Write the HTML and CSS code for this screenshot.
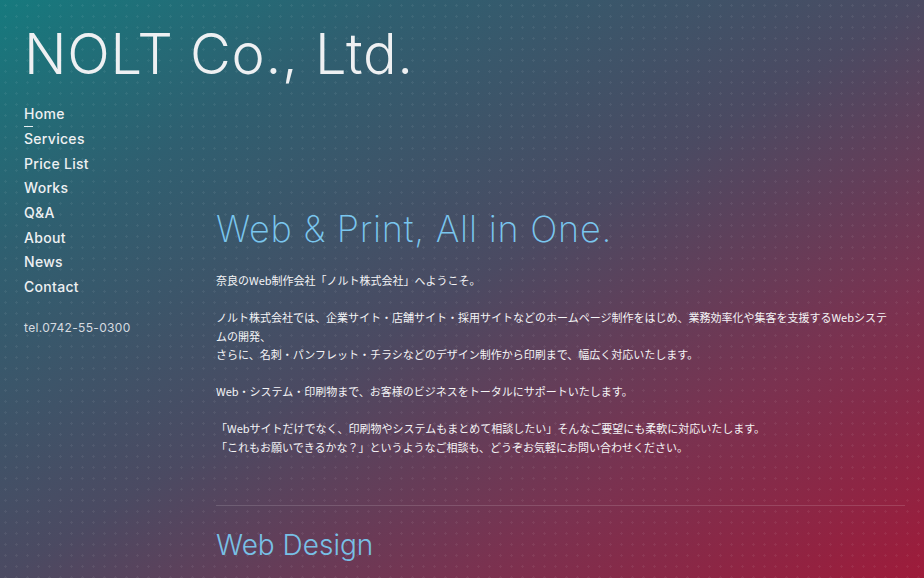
FILE: index.html
```html
<!DOCTYPE html>
<html lang="ja">
<head>
<meta charset="utf-8">
<title>NOLT Co., Ltd.</title>
<link rel="stylesheet" href="styles.css">
</head>
<body>
<div class="page">
  <header class="header">
    <h1 class="logo">NOLT Co., Ltd.</h1>
  </header>
  <div class="columns">
    <aside class="sidebar">
      <nav class="nav">
        <a class="nav-item active" href="#">Home</a>
        <a class="nav-item" href="#">Services</a>
        <a class="nav-item" href="#">Price List</a>
        <a class="nav-item" href="#">Works</a>
        <a class="nav-item" href="#">Q&amp;A</a>
        <a class="nav-item" href="#">About</a>
        <a class="nav-item" href="#">News</a>
        <a class="nav-item" href="#">Contact</a>
      </nav>
      <p class="tel">tel.0742-55-0300</p>
    </aside>
    <main class="main">
      <h2 class="hero-title">Web &amp; Print, All in One.</h2>
      <div class="intro">
        <p>奈良のWeb制作会社「ノルト株式会社」へようこそ。</p>
        <p>ノルト株式会社では、企業サイト・店舗サイト・採用サイトなどのホームページ制作をはじめ、業務効率化や集客を支援するWebシステムの開発、<br>さらに、名刺・パンフレット・チラシなどのデザイン制作から印刷まで、幅広く対応いたします。</p>
        <p>Web・システム・印刷物まで、お客様のビジネスをトータルにサポートいたします。</p>
        <p>「Webサイトだけでなく、印刷物やシステムもまとめて相談したい」そんなご要望にも柔軟に対応いたします。<br>「これもお願いできるかな？」というようなご相談も、どうぞお気軽にお問い合わせください。</p>
      </div>
      <hr class="divider">
      <h3 class="section-title">Web Design</h3>
    </main>
  </div>
</div>
</body>
</html>
```

FILE: styles.css
```css
html, body {
  margin: 0;
  padding: 0;
  height: 100%;
}

body {
  min-height: 578px;
  overflow: hidden;
  color: #f2f2f4;
  font-family: Inter, "Noto Sans", "Noto Sans CJK JP", sans-serif;
  background-color: #4f4860;
  background-image:
    radial-gradient(rgba(255, 255, 255, 0.06) 1px, transparent 1.2px),
    linear-gradient(to bottom right, #167a7e 0%, #2f5f70 22%, #4b4a62 50%, #7a3250 75%, #9e1b3a 100%);
  background-size: 11px 11px, 100% 100%;
}

.page {
  padding: 21px 19px 0 24px;
}

.header {
  display: flex;
}

.logo {
  margin: 0;
  font-size: 56px;
  font-weight: 300;
  line-height: 1.2;
  letter-spacing: 0.7px;
  color: #eef0f2;
}

.columns {
  display: grid;
  grid-template-columns: 192px 1fr;
  margin-top: 14px;
}

.nav {
  display: flex;
  flex-direction: column;
}

.nav-item {
  position: relative;
  align-self: flex-start;
  color: #eef0f2;
  text-decoration: none;
  font-size: 14px;
  font-weight: 500;
  letter-spacing: 0.3px;
  line-height: 24.7px;
}

.nav-item.active::after {
  content: "";
  position: absolute;
  left: 0;
  bottom: 0;
  width: 9px;
  height: 1px;
  background: #e6eef2;
}

.tel {
  margin: 16px 0 0;
  font-size: 12px;
  letter-spacing: 0.35px;
  line-height: 24px;
  color: #d6dbe0;
}

.main {
  padding-top: 106px;
}

.hero-title {
  margin: 0;
  font-size: 36px;
  font-weight: 200;
  line-height: 1.2;
  letter-spacing: 0.75px;
  color: #7ac6ee;
}

.intro {
  margin-top: 20px;
  font-family: "Noto Sans CJK JP", sans-serif;
  font-size: 11px;
  line-height: 18.5px;
  color: #f4f4f6;
  max-width: 676px;
}

.intro p {
  margin: 0 0 18.5px;
}

.intro p:last-child {
  margin-bottom: 0;
}

.divider {
  margin: 49px 0 0;
  border: 0;
  height: 1px;
  background: rgba(255, 255, 255, 0.14);
}

.section-title {
  margin: 23px 0 0;
  font-size: 28px;
  font-weight: 300;
  line-height: 1.2;
  color: #78c0e6;
}
```
